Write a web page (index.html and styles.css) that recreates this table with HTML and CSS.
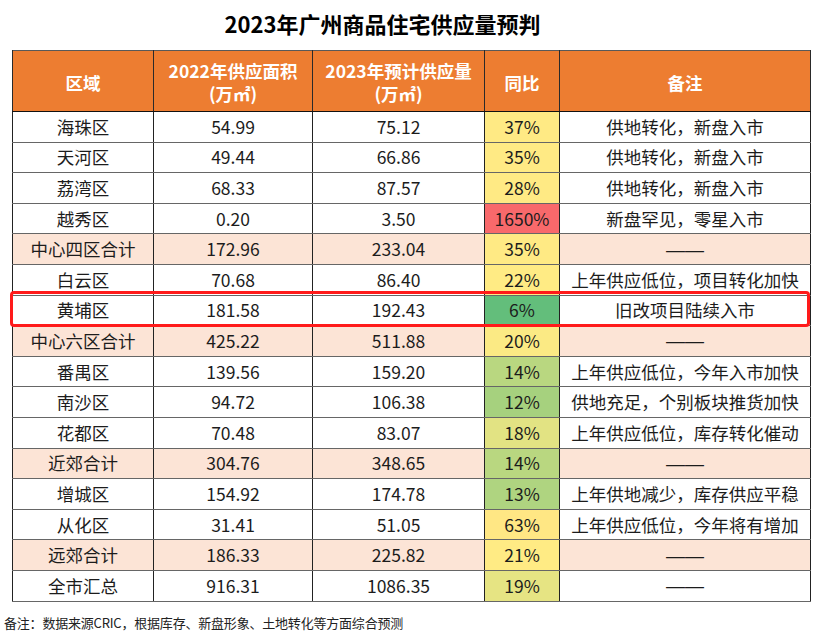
FILE: index.html
```html
<!DOCTYPE html>
<html lang="zh-CN">
<head>
<meta charset="utf-8">
<title>2023年广州商品住宅供应量预判</title>
<link rel="stylesheet" href="styles.css">
</head>
<body>
<div class="page">
  <h1 class="title">2023年广州商品住宅供应量预判</h1>
  <div class="table-wrap">
    <table class="grid">
      <colgroup>
        <col class="c1"><col class="c2"><col class="c3"><col class="c4"><col class="c5">
      </colgroup>
      <thead>
        <tr>
          <th>区域</th>
          <th><span class="hl1">2022年供应面积</span><span class="hl2">(万㎡)</span></th>
          <th><span class="hl1">2023年预计供应量</span><span class="hl2">(万㎡)</span></th>
          <th>同比</th>
          <th>备注</th>
        </tr>
      </thead>
      <tbody>
        <tr><td>海珠区</td><td>54.99</td><td>75.12</td><td class="pct" style="background:#FFEA84">37%</td><td>供地转化，新盘入市</td></tr>
        <tr><td>天河区</td><td>49.44</td><td>66.86</td><td class="pct" style="background:#FFEA84">35%</td><td>供地转化，新盘入市</td></tr>
        <tr><td>荔湾区</td><td>68.33</td><td>87.57</td><td class="pct" style="background:#FFEA84">28%</td><td>供地转化，新盘入市</td></tr>
        <tr><td>越秀区</td><td>0.20</td><td>3.50</td><td class="pct" style="background:#F8696B">1650%</td><td>新盘罕见，零星入市</td></tr>
        <tr class="sub"><td>中心四区合计</td><td>172.96</td><td>233.04</td><td class="pct" style="background:#FFEA84">35%</td><td><span class="dash">——</span></td></tr>
        <tr><td>白云区</td><td>70.68</td><td>86.40</td><td class="pct" style="background:#FFEB84">22%</td><td>上年供应低位，项目转化加快</td></tr>
        <tr><td>黄埔区</td><td>181.58</td><td>192.43</td><td class="pct" style="background:#63BE7B">6%</td><td>旧改项目陆续入市</td></tr>
        <tr class="sub"><td>中心六区合计</td><td>425.22</td><td>511.88</td><td class="pct" style="background:#FBEA84">20%</td><td><span class="dash">——</span></td></tr>
        <tr><td>番禺区</td><td>139.56</td><td>159.20</td><td class="pct" style="background:#B9D780">14%</td><td>上年供应低位，今年入市加快</td></tr>
        <tr><td>南沙区</td><td>94.72</td><td>106.38</td><td class="pct" style="background:#A6D17E">12%</td><td>供地充足，个别板块推货加快</td></tr>
        <tr><td>花都区</td><td>70.48</td><td>83.07</td><td class="pct" style="background:#E2E383">18%</td><td>上年供应低位，库存转化催动</td></tr>
        <tr class="sub"><td>近郊合计</td><td>304.76</td><td>348.65</td><td class="pct" style="background:#B9D780">14%</td><td><span class="dash">——</span></td></tr>
        <tr><td>增城区</td><td>154.92</td><td>174.78</td><td class="pct" style="background:#AFD480">13%</td><td>上年供地减少，库存供应平稳</td></tr>
        <tr><td>从化区</td><td>31.41</td><td>51.05</td><td class="pct" style="background:#FFE784">63%</td><td>上年供应低位，今年将有增加</td></tr>
        <tr class="sub"><td>远郊合计</td><td>186.33</td><td>225.82</td><td class="pct" style="background:#FFEB84">21%</td><td><span class="dash">——</span></td></tr>
        <tr><td>全市汇总</td><td>916.31</td><td>1086.35</td><td class="pct" style="background:#E6E483">19%</td><td><span class="dash">——</span></td></tr>
      </tbody>
    </table>
    <div class="highlight"></div>
  </div>
  <p class="note">备注：数据来源CRIC，根据库存、新盘形象、土地转化等方面综合预测</p>
</div>
</body>
</html>
```

FILE: styles.css
```css
* { box-sizing: border-box; }
html, body {
  margin: 0;
  padding: 0;
  background: #ffffff;
}
body {
  font-family: "Noto Sans CJK SC", "Noto Sans", sans-serif;
  color: #1c1c1c;
  width: 823px;
  height: 642px;
  overflow: hidden;
}
.page {
  display: flex;
  flex-direction: column;
}
.title {
  margin: 0;
  height: 50px;
  padding: 9px 58px 0 0;
  text-align: center;
  font-size: 22px;
  line-height: 28px;
  font-weight: 700;
  color: #000;
}
.table-wrap {
  position: relative;
  margin-left: 12px;
  width: 798px;
}
.grid {
  border-collapse: collapse;
  table-layout: fixed;
  width: 798px;
  border: 1px solid #595959;
}
.c1 { width: 141px; }
.c2 { width: 159px; }
.c3 { width: 172px; }
.c4 { width: 75px; }
.c5 { width: 251px; }
.grid th {
  background: #ED7D31;
  color: #ffffff;
  font-size: 17.5px;
  font-weight: 700;
  line-height: 23px;
  height: 61px;
  padding: 2px 0 0 0;
  text-align: center;
  vertical-align: middle;
  border-left: 1px solid #2a2a2a;
  border-right: 1px solid #2a2a2a;
  border-bottom: 1px solid #111;
}
.hl1, .hl2 {
  display: block;
}
.grid td {
  height: 30.6px;
  padding: 0;
  text-align: center;
  vertical-align: middle;
  font-size: 17.5px;
  line-height: 20px;
  border-left: 1px solid #222;
  border-right: 1px solid #222;
  border-bottom: 1px solid #666;
  white-space: nowrap;
}
.grid tr.sub td {
  background: #FCE4D6;
}
.grid td.pct {
  border-left: 1px solid #333;
}
.dash {
  font-family: "Liberation Sans", sans-serif;
  font-size: 19px;
}
.highlight {
  position: absolute;
  left: -2px;
  top: 241px;
  width: 800px;
  height: 36px;
  border: 3px solid #FF1A1A;
  border-radius: 4px;
  pointer-events: none;
}
.note {
  margin: 12px 0 0 4px;
  font-size: 13px;
  line-height: 18px;
  color: #222;
  letter-spacing: -0.2px;
}
```
